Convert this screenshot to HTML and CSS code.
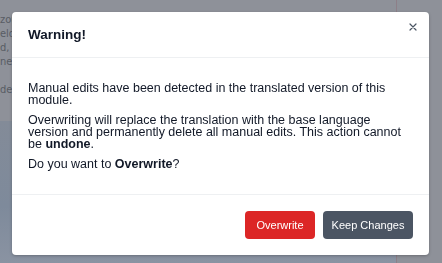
FILE: index.html
```html
<!DOCTYPE html>
<html lang="en">
<head>
  <meta charset="UTF-8" />
  <title>Warning</title>
  <link rel="stylesheet" href="styles.css">
</head>
<body>
  <!-- page behind the dialog -->
  <div class="page">
    <div class="page-text">
      <p>zou</p>
      <p>elde</p>
      <p>d, k</p>
      <p>net</p>
      <p class="gap">deri</p>
    </div>
    <div class="page-photo"></div>
  </div>

  <div class="overlay">
    <div class="modal">
      <div class="modal-header">
        <h3>Warning!</h3>
        <svg class="close" width="8" height="8" viewBox="0 0 8 8">
          <path d="M1 1L7 7M7 1L1 7" stroke="#4b5563" stroke-width="1.2" stroke-linecap="round"/>
        </svg>
      </div>
      <div class="modal-body">
        <p>Manual edits have been detected in the translated version of this module.</p>
        <p>Overwriting will replace the translation with the base language version and permanently delete all manual edits. This action cannot be <strong>undone</strong>.</p>
        <p>Do you want to <strong>Overwrite</strong>?</p>
      </div>
      <div class="modal-footer">
        <button class="btn btn-danger">Overwrite</button>
        <button class="btn btn-dark">Keep Changes</button>
      </div>
    </div>
  </div>
</body>
</html>
```

FILE: styles.css
```css
body {
  margin: 0;
  font-family: "Liberation Sans", Arial, sans-serif;
  background: #8e9199;
  overflow: hidden;
}

.page {
  height: 263px;
  display: flex;
  flex-direction: column;
  border-right: 1px solid #8d7f88;
  width: 396px;
}

.page-text {
  padding-top: 13px;
  font-family: "DejaVu Sans", sans-serif;
  font-stretch: condensed;
  font-size: 11px;
  color: #585c64;
}

.page-text p {
  margin: 0;
  line-height: 14px;
}

.page-text .gap {
  margin-top: 14px;
}

.page-photo {
  flex: 1;
  margin-top: 24px;
  background: linear-gradient(180deg, #838b98 0%, #7e8a9b 60%, #8a93a2 100%);
}

.overlay {
  position: fixed;
  top: 0;
  left: 0;
  width: 100%;
  height: 100%;
  padding: 12px 13px 10px 12px;
  box-sizing: border-box;
}

.modal {
  width: 417px;
  background: #fff;
  border-radius: 4px;
  box-shadow: 0 1px 3px rgba(0, 0, 0, 0.25);
  color: #1f2937;
}

.modal-header {
  display: flex;
  justify-content: space-between;
  align-items: center;
  height: 45px;
  padding: 0 16px;
  border-bottom: 1px solid #eef0f2;
}

.modal-header h3 {
  margin: 0;
  font-size: 13.5px;
  font-weight: 700;
  color: #111827;
}

.close {
  align-self: flex-start;
  margin-top: 11px;
  margin-right: -4px;
}

.modal-body {
  padding: 24px 16px;
  font-size: 12.5px;
  line-height: 12px;
  color: #111827;
}

.modal-body p {
  margin: 0 0 8px;
}

.modal-body p:last-child {
  margin-bottom: 0;
}

.modal-body strong {
  font-weight: 700;
}

.modal-footer {
  display: flex;
  justify-content: flex-end;
  gap: 8px;
  padding: 16px;
  border-top: 1px solid #eef0f2;
}

.btn {
  height: 28px;
  border: none;
  border-radius: 4px;
  color: #fff;
  font-family: "Liberation Sans", Arial, sans-serif;
  font-size: 11px;
  padding: 0;
  white-space: nowrap;
}

.btn-danger {
  background: #dc2626;
  width: 70px;
}

.btn-dark {
  background: #4b5563;
  width: 90px;
}
```
